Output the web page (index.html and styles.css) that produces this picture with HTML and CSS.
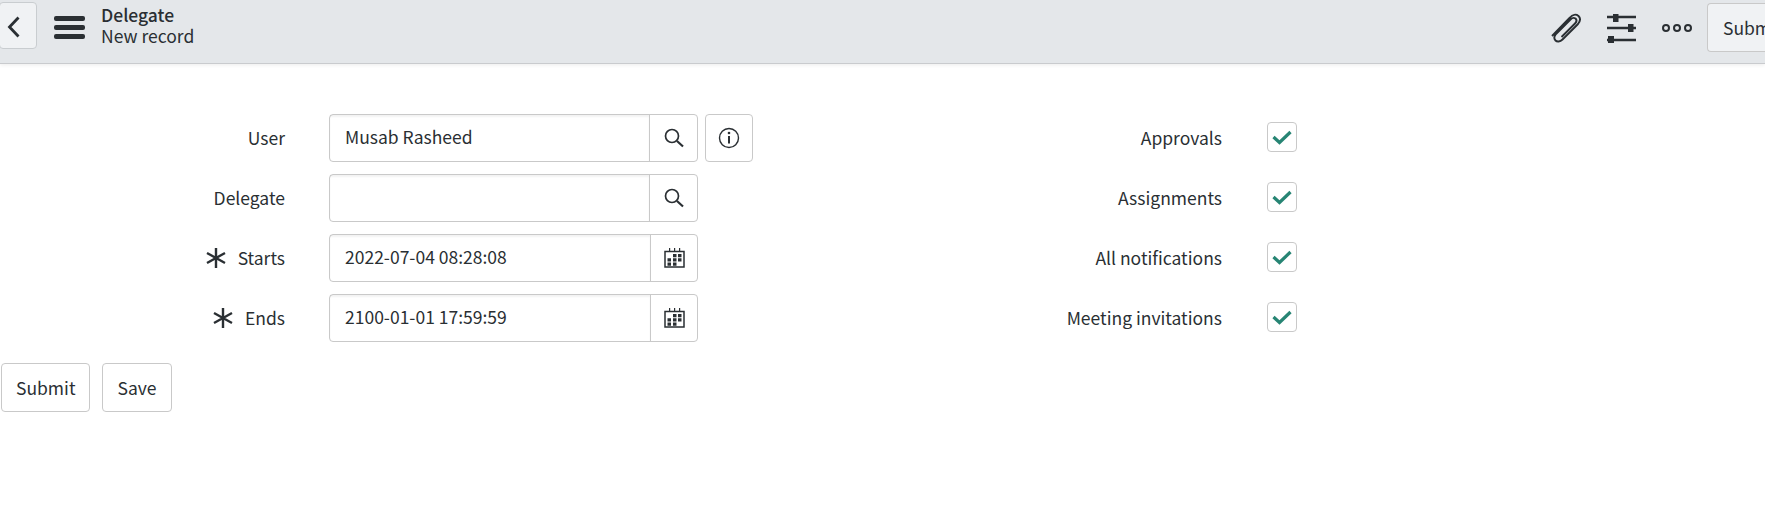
FILE: index.html
```html
<!DOCTYPE html>
<html lang="en">
<head>
    <meta charset="UTF-8">
    <title>Delegate - New record</title>
    <link rel="stylesheet" href="styles.css">
</head>
<body>
    <!-- Header bar -->
    <div class="header">
        <button class="back-btn">
            <svg width="13" height="22" viewBox="0 0 13 22"><path d="M11.500 1.500 L2.500 11 L11.500 20.500" fill="none" stroke="#2a2f33" stroke-width="2.800"/></svg>
        </button>
        <div class="hamburger"><span></span><span></span><span></span></div>
        <div class="titles">
            <div class="title">Delegate</div>
            <div class="subtitle">New record</div>
        </div>
        <div class="header-right">
            <svg class="clip" width="30" height="30" viewBox="0 0 30 30"><path d="M1 23 L19 4.500 C21.500 1.500 25 1 27.500 3 C30 5.500 29 8.500 27 11 L11.500 26.500 C9 29 6 29 4.500 27.500 C3 26 3 23.500 5 21 L19.500 6.500 C21 5 23 4.500 24.500 5.500 C26 7 25.500 9 24 10.500 L10.500 24" fill="none" stroke="#2a2f33" stroke-width="1.900"/></svg>
            <svg class="sliders" width="30" height="30" viewBox="0 0 30 30"><path d="M0 4 H29 M0 15 H29 M0 27 H29" stroke="#2a2f33" stroke-width="2.400"/><path d="M6 1 H11.500 V9 H6 Z M21 11 H26.500 V19 H21 Z M1 23 H7 V30 H1 Z" fill="#2a2f33"/></svg>
            <svg class="more" width="30" height="10" viewBox="0 0 30 10"><circle cx="4" cy="5" r="3" fill="none" stroke="#2a2f33" stroke-width="2"/><circle cx="15" cy="5" r="3" fill="none" stroke="#2a2f33" stroke-width="2"/><circle cx="26" cy="5" r="3" fill="none" stroke="#2a2f33" stroke-width="2"/></svg>
            <button class="btn header-submit">Submit</button>
        </div>
    </div>

    <!-- Form -->
    <div class="form">
        <div class="column left-col">
            <div class="row">
                <label class="field-label">User</label>
                <div class="input-group">
                    <div class="input">Musab Rasheed</div>
                    <div class="addon">
                        <svg width="22" height="22" viewBox="0 0 22 22"><circle cx="9" cy="9" r="6.500" fill="none" stroke="#2a2f33" stroke-width="1.700"/><path d="M14 14 L20 19.500" stroke="#2a2f33" stroke-width="2.200"/></svg>
                    </div>
                </div>
                <button class="info-btn">
                    <svg width="22" height="22" viewBox="0 0 22 22"><circle cx="11" cy="11" r="9.500" fill="none" stroke="#2a2f33" stroke-width="1.400"/><path d="M11 9 V16.500" stroke="#2a2f33" stroke-width="2"/><circle cx="11" cy="6" r="1.300" fill="#2a2f33"/></svg>
                </button>
            </div>
            <div class="row">
                <label class="field-label">Delegate</label>
                <div class="input-group">
                    <div class="input"></div>
                    <div class="addon">
                        <svg width="22" height="22" viewBox="0 0 22 22"><circle cx="9" cy="9" r="6.500" fill="none" stroke="#2a2f33" stroke-width="1.700"/><path d="M14 14 L20 19.500" stroke="#2a2f33" stroke-width="2.200"/></svg>
                    </div>
                </div>
            </div>
            <div class="row">
                <label class="field-label">
                    <svg class="required" width="20" height="20" viewBox="0 0 20 20"><path d="M10 0 V20 M1 5 L19 15 M1 15 L19 5" stroke="#2a2f33" stroke-width="2.400"/></svg>Starts
                </label>
                <div class="input-group">
                    <div class="input">2022-07-04 08:28:08</div>
                    <div class="addon date">
                        <svg width="21" height="20" viewBox="0 0 21 20"><path d="M1 3.500 H20 V19 H1 Z" fill="none" stroke="#2a2f33" stroke-width="1.500"/><path d="M5 0 H6.200 V4 H5 Z M10 0 H11.200 V4 H10 Z M15 0 H16.200 V4 H15 Z" fill="#2a2f33"/><path d="M9 6 H12.500 V9.200 H9 Z M14 6 H17.500 V9.200 H14 Z M3.500 10.200 H7 V13.500 H3.500 Z M9 10.200 H12.500 V13.500 H9 Z M14 10.200 H17.500 V13.500 H14 Z M3.500 14.500 H7 V17.800 H3.500 Z M9 14.500 H12.500 V17.800 H9 Z" fill="#2a2f33"/></svg>
                    </div>
                </div>
            </div>
            <div class="row">
                <label class="field-label">
                    <svg class="required" width="20" height="20" viewBox="0 0 20 20"><path d="M10 0 V20 M1 5 L19 15 M1 15 L19 5" stroke="#2a2f33" stroke-width="2.400"/></svg>Ends
                </label>
                <div class="input-group">
                    <div class="input">2100-01-01 17:59:59</div>
                    <div class="addon date">
                        <svg width="21" height="20" viewBox="0 0 21 20"><path d="M1 3.500 H20 V19 H1 Z" fill="none" stroke="#2a2f33" stroke-width="1.500"/><path d="M5 0 H6.200 V4 H5 Z M10 0 H11.200 V4 H10 Z M15 0 H16.200 V4 H15 Z" fill="#2a2f33"/><path d="M9 6 H12.500 V9.200 H9 Z M14 6 H17.500 V9.200 H14 Z M3.500 10.200 H7 V13.500 H3.500 Z M9 10.200 H12.500 V13.500 H9 Z M14 10.200 H17.500 V13.500 H14 Z M3.500 14.500 H7 V17.800 H3.500 Z M9 14.500 H12.500 V17.800 H9 Z" fill="#2a2f33"/></svg>
                    </div>
                </div>
            </div>
        </div>
        <div class="column right-col">
            <div class="row">
                <label class="check-label">Approvals</label>
                <span class="checkbox"><svg width="20" height="15" viewBox="0 0 20 15"><path d="M1.500 7 L7.500 12.500 L18.500 2" fill="none" stroke="#278574" stroke-width="3.200"/></svg></span>
            </div>
            <div class="row">
                <label class="check-label">Assignments</label>
                <span class="checkbox"><svg width="20" height="15" viewBox="0 0 20 15"><path d="M1.500 7 L7.500 12.500 L18.500 2" fill="none" stroke="#278574" stroke-width="3.200"/></svg></span>
            </div>
            <div class="row">
                <label class="check-label">All notifications</label>
                <span class="checkbox"><svg width="20" height="15" viewBox="0 0 20 15"><path d="M1.500 7 L7.500 12.500 L18.500 2" fill="none" stroke="#278574" stroke-width="3.200"/></svg></span>
            </div>
            <div class="row">
                <label class="check-label">Meeting invitations</label>
                <span class="checkbox"><svg width="20" height="15" viewBox="0 0 20 15"><path d="M1.500 7 L7.500 12.500 L18.500 2" fill="none" stroke="#278574" stroke-width="3.200"/></svg></span>
            </div>
        </div>
    </div>

    <div class="actions">
        <button class="btn">Submit</button>
        <button class="btn">Save</button>
    </div>
</body>
</html>
```

FILE: styles.css
```css
html, body {
    height: 100%;
    overflow: hidden;
}
body {
    font-family: 'Noto Sans CJK SC', 'Noto Sans', sans-serif;
    font-size: 17.5px;
    color: #2a2f33;
    background-color: #fff;
    margin: 0;
}
.header {
    display: flex;
    height: 63px;
    background: #e4e7ea;
    border-bottom: 1px solid #c9cbce;
    box-shadow: 0 1px 4px rgba(0, 0, 0, 0.08);
}
.back-btn {
    flex: none;
    width: 38px;
    height: 47px;
    margin: 2px 0 0 -1px;
    background: #f0f2f4;
    border: 1px solid #c9cdd0;
    border-radius: 4px;
    display: flex;
    align-items: center;
    justify-content: center;
    padding: 3px 9px 0 0;
}
.hamburger {
    flex: none;
    margin: 16px 0 0 17px;
    display: flex;
    flex-direction: column;
    gap: 4px;
}
.hamburger span {
    display: block;
    width: 31px;
    height: 5px;
    background: #2a2f33;
    border-radius: 2px;
}
.titles {
    margin: 4px 0 0 16px;
    line-height: 21px;
}
.title {
    font-weight: 500;
}
.header-right {
    margin-left: auto;
    display: flex;
    align-items: flex-start;
}
.clip {
    margin: 13px 26px 0 0;
}
.sliders {
    margin: 13px 25px 0 0;
}
.more {
    margin: 23px 15px 0 0;
}
.btn {
    font-family: inherit;
    font-size: 17.5px;
    color: #2a2f33;
    height: 49px;
    padding: 0 14px;
    background: #fff;
    border: 1px solid #c9c9c9;
    border-radius: 4px;
}
.header-submit {
    flex: none;
    width: 58px;
    height: 49px;
    margin-top: 3px;
    padding: 0 0 0 15px;
    border-right: none;
    border-radius: 4px 0 0 4px;
    background: #f0f2f4;
    text-align: left;
    white-space: nowrap;
    overflow: hidden;
}
.form {
    display: flex;
    padding-top: 50px;
}
.column {
    display: flex;
    flex-direction: column;
    gap: 12px;
}
.left-col {
    width: 960px;
}
.row {
    display: flex;
    align-items: center;
    height: 48px;
}
.field-label {
    flex: none;
    width: 285px;
    padding-bottom: 2px;
    display: flex;
    justify-content: flex-end;
    align-items: center;
}
.required {
    margin: 2px 12px 0 0;
}
.input-group {
    flex: none;
    display: flex;
    width: 369px;
    height: 48px;
    margin-left: 44px;
    border: 1px solid #c9c9c9;
    border-radius: 4px;
    box-sizing: border-box;
}
.input {
    flex: 1;
    padding-left: 15px;
    line-height: 44px;
    box-shadow: inset 0 2px 2px rgba(0, 0, 0, 0.05);
}
.addon {
    flex: none;
    width: 48px;
    box-sizing: border-box;
    border-left: 1px solid #c9c9c9;
    display: flex;
    align-items: center;
    justify-content: center;
}
.addon.date {
    width: 47px;
}
.info-btn {
    flex: none;
    width: 48px;
    height: 48px;
    margin-left: 7px;
    background: #fff;
    border: 1px solid #c9c9c9;
    border-radius: 4px;
    padding: 0;
    display: flex;
    align-items: center;
    justify-content: center;
}
.check-label {
    flex: none;
    width: 262px;
    padding-bottom: 2px;
    text-align: right;
}
.checkbox {
    flex: none;
    width: 30px;
    height: 30px;
    margin-left: 45px;
    margin-top: -2px;
    border: 1px solid #c9c9c9;
    border-radius: 4px;
    box-sizing: border-box;
    display: flex;
    align-items: center;
    justify-content: center;
}
.actions {
    display: flex;
    gap: 12px;
    margin-top: 21px;
    padding-left: 1px;
}
```
